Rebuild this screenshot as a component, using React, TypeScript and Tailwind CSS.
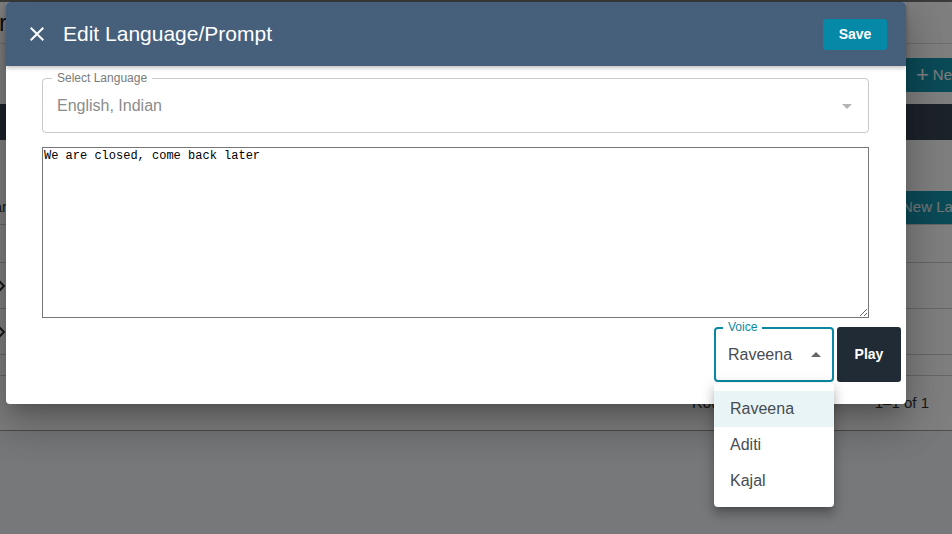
import { useState } from 'react'

const VOICES = ['Raveena', 'Aditi', 'Kajal']

function CloseIcon() {
  return (
    <svg viewBox="0 0 24 24" className="w-6 h-6 fill-white">
      <path d="M19 6.41 17.59 5 12 10.59 6.41 5 5 6.41 10.59 12 5 17.59 6.41 19 12 13.41 17.59 19 19 17.59 13.41 12z" />
    </svg>
  )
}

function ArrowDrop({ up, className }: { up?: boolean; className: string }) {
  return (
    <svg viewBox="0 0 24 24" className={className}>
      <path d={up ? 'M7 14l5-5 5 5z' : 'M7 10l5 5 5-5z'} />
    </svg>
  )
}

// the list page that sits behind the modal
function LanguagePage() {
  return (
    <div className="flex flex-col bg-white h-[431px] border-b border-[#9a9a9a]">
      <div className="h-[2px] bg-[#777]" />
      <div className="h-[42px] flex items-center border-b border-[#dcdcdc]">
        <div className="w-[7px] flex justify-end">
          <h1 className="whitespace-nowrap text-[24px] text-[#222]">Prompt Manager</h1>
        </div>
      </div>
      <div className="h-[60px] flex items-start pt-[14px] pl-[904px]">
        <button className="flex items-center gap-1 h-[34px] px-3 rounded bg-[#1796b0] text-white text-[15px] whitespace-nowrap">
          <span className="text-[22px] leading-none font-light">+</span> New
        </button>
      </div>
      <div className="h-[36px] bg-[#3a4656]" />
      <div className="h-[85px] flex items-center justify-between border-b border-[#cfcfcf]">
        <div className="w-[7px] flex justify-end pt-[50px]">
          <span className="whitespace-nowrap text-[15px] text-[#333]">Calendar</span>
        </div>
        <div className="self-end w-[60px] h-[33px] bg-[#1796b0] flex items-center pl-[10px] text-[15px] text-[#e6f0f2] whitespace-nowrap overflow-hidden">
          New Language
        </div>
      </div>
      <div className="h-[38px] border-b border-[#cfcfcf]" />
      {[0, 1].map(i => (
        <div key={i} className="h-[46px] flex items-center border-b border-[#cfcfcf]">
          <div className="w-[6px] overflow-hidden">
            <svg viewBox="0 0 12 20" className="w-[12px] h-[20px] -ml-[6px] stroke-[#333] fill-none stroke-[2]">
              <path d="M2 2l8 8-8 8" />
            </svg>
          </div>
        </div>
      ))}
      <div className="h-[21px] border-b border-[#cfcfcf]" />
      <div className="flex-1 flex items-center justify-end gap-[82px] pr-[23px] text-[15px] text-[#333]">
        <span>Rows per page</span>
        <span>1–1 of 1</span>
      </div>
    </div>
  )
}

export default function App() {
  const [voice, setVoice] = useState('Raveena')
  const [text, setText] = useState('We are closed, come back later')

  return (
    <div className="relative w-[952px] h-[534px] overflow-hidden bg-[#eef0f4] font-['Liberation_Sans',Arial,sans-serif]">
      <LanguagePage />

      {/* backdrop */}
      <div className="absolute inset-0 bg-black/50" />

      {/* dialog */}
      <div className="absolute left-[6px] top-[2px] w-[900px] h-[402px] bg-white rounded flex flex-col shadow-[0_11px_15px_-7px_rgba(0,0,0,0.2),0_24px_38px_3px_rgba(0,0,0,0.14),0_9px_46px_8px_rgba(0,0,0,0.12)]">
        <div className="relative z-10 h-[64px] shrink-0 bg-[#46607c] rounded-t flex items-center pl-[19px] pr-[19px] shadow-[0_2px_4px_rgba(0,0,0,0.25)]">
          <button className="w-6 h-6 flex items-center justify-center">
            <CloseIcon />
          </button>
          <h2 className="ml-[14px] text-[21px] text-white">Edit Language/Prompt</h2>
          <button className="ml-auto h-[31px] w-[64px] rounded-[3px] bg-[#0689a7] text-white text-[14px] font-semibold">
            Save
          </button>
        </div>

        <div className="flex flex-col pt-[12px] pl-[36px] pr-[5px]">
          {/* language select (disabled) */}
          <div className="relative w-[827px] h-[55px] rounded border border-[#c9c9c9] flex items-center pl-[14px] pr-[9px]">
            <span className="absolute -top-[8px] left-[9px] px-[5px] bg-white text-[12px] leading-[15px] text-[#7a7a7a]">
              Select Language
            </span>
            <span className="text-[16px] text-[#8c8c8c] pt-[1px]">English, Indian</span>
            <ArrowDrop className="ml-auto w-6 h-6 fill-[#b5b5b5]" />
          </div>

          <textarea
            value={text}
            onChange={e => setText(e.target.value)}
            className="mt-[14px] w-[827px] h-[171px] border border-[#767676] px-[1px] py-[1px] font-['Liberation_Mono','Courier_New',monospace] text-[12px] leading-[15px] text-black outline-none"
          />

          <div className="mt-[9px] flex justify-end gap-[3px]">
            {/* voice select, open */}
            <div className="relative w-[120px] h-[55px] rounded border-2 border-[#0a87a1] flex items-center pl-[12px] pr-[4px]">
              <span className="absolute -top-[9px] left-[7px] px-[5px] bg-white text-[12px] leading-[15px] text-[#0a87a1]">
                Voice
              </span>
              <span className="text-[16px] text-[#474c52]">{voice}</span>
              <ArrowDrop up className="ml-auto w-6 h-6 fill-[#666]" />

              <ul className="absolute z-20 left-[-2px] top-[54px] w-[120px] py-[8px] bg-white rounded shadow-[0_5px_5px_-3px_rgba(0,0,0,0.2),0_8px_10px_1px_rgba(0,0,0,0.14),0_3px_14px_2px_rgba(0,0,0,0.12)]">
                {VOICES.map(v => (
                  <li
                    key={v}
                    onClick={() => setVoice(v)}
                    className={`h-[36px] flex items-center pl-[16px] text-[16px] text-[#474c52] cursor-pointer ${v === voice ? 'bg-[#e9f4f6]' : ''}`}
                  >
                    {v}
                  </li>
                ))}
              </ul>
            </div>
            <button className="w-[64px] h-[55px] rounded-[3px] bg-[#212b35] text-white text-[14px] font-semibold">
              Play
            </button>
          </div>
        </div>
      </div>
    </div>
  )
}
